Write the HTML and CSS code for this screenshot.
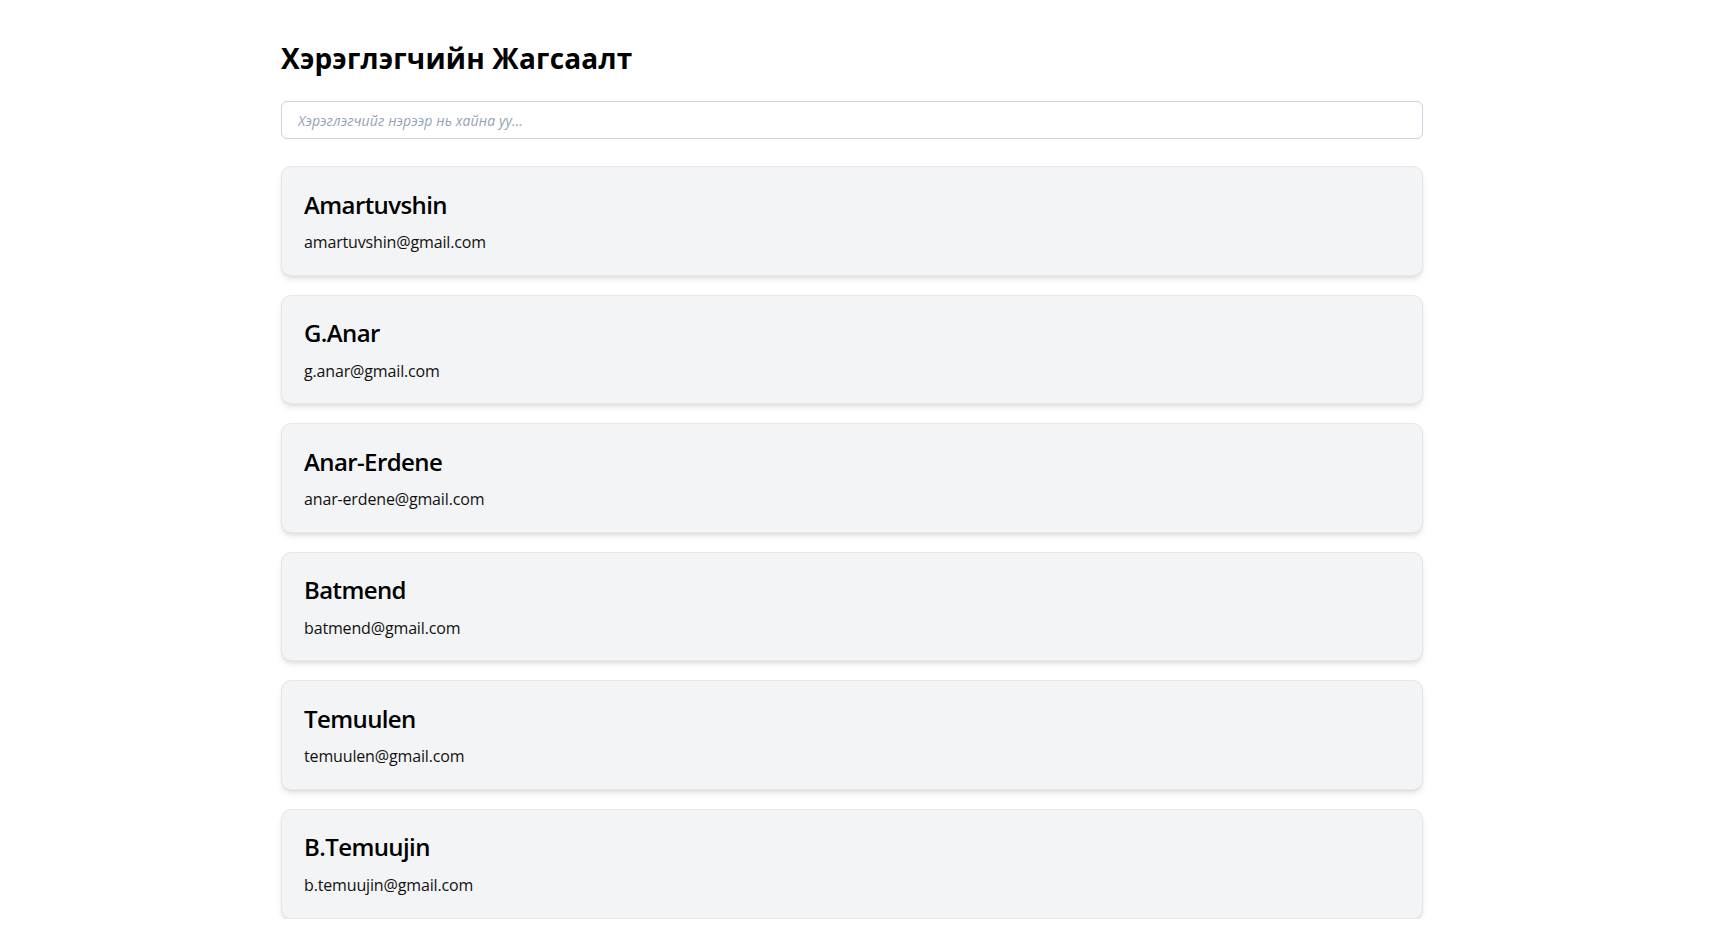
FILE: index.html
```html
<!DOCTYPE html>
<html lang="mn">
<head>
<meta charset="utf-8">
<title>Хэрэглэгчийн Жагсаалт</title>
<link rel="stylesheet" href="styles.css">
</head>
<body>
<main class="page">
  <h1 class="title">Хэрэглэгчийн Жагсаалт</h1>
  <input class="search" type="text" placeholder="Хэрэглэгчийг нэрээр нь хайна уу...">
  <ul class="user-list">
    <li class="user-card"><h2 class="user-name">Amartuvshin</h2><p class="user-email">amartuvshin@gmail.com</p></li>
    <li class="user-card"><h2 class="user-name">G.Anar</h2><p class="user-email">g.anar@gmail.com</p></li>
    <li class="user-card"><h2 class="user-name">Anar-Erdene</h2><p class="user-email">anar-erdene@gmail.com</p></li>
    <li class="user-card"><h2 class="user-name">Batmend</h2><p class="user-email">batmend@gmail.com</p></li>
    <li class="user-card"><h2 class="user-name">Temuulen</h2><p class="user-email">temuulen@gmail.com</p></li>
    <li class="user-card"><h2 class="user-name">B.Temuujin</h2><p class="user-email">b.temuujin@gmail.com</p></li>
  </ul>
</main>
</body>
</html>
```
FILE: styles.css
```css
* { box-sizing: border-box; }
html, body { margin: 0; padding: 0; background: #ffffff; }
body {
  font-family: "Open Sans", "Noto Sans", "Liberation Sans", sans-serif;
  color: #111111;
}
.page {
  width: 1142px;
  margin-left: 281px;
  padding-top: 40px;
  display: flex;
  flex-direction: column;
}
.title {
  margin: 0;
  font-size: 28px;
  line-height: 36px;
  font-weight: 700;
  letter-spacing: 0.2px;
  color: #000;
}
.search {
  margin-top: 25px;
  height: 38px;
  width: 100%;
  border: 1px solid #cbd5e1;
  border-radius: 6px;
  padding: 0 16px;
  font-family: inherit;
  font-size: 14px;
  letter-spacing: 0.1px;
  outline: none;
  background: #fff;
}
.search::placeholder {
  color: #94a3b8;
  font-style: italic;
}
.user-list {
  list-style: none;
  margin: 27px 0 0;
  padding: 0;
  display: flex;
  flex-direction: column;
  gap: 19px;
}
.user-card {
  background: #f3f4f6;
  border: 1px solid #e5e7eb;
  border-radius: 10px;
  padding: 21.5px 22px 20.5px;
  box-shadow: 0 4px 6px -1px rgba(0,0,0,0.10), 0 2px 4px -2px rgba(0,0,0,0.10);
}
.user-name {
  margin: 0 0 9.6px;
  font-size: 24px;
  line-height: 32px;
  font-weight: 600;
  letter-spacing: -0.6px;
  color: #000;
}
.user-email {
  margin: 0;
  font-size: 16px;
  line-height: 24px;
  letter-spacing: -0.15px;
  color: #111;
}
```
